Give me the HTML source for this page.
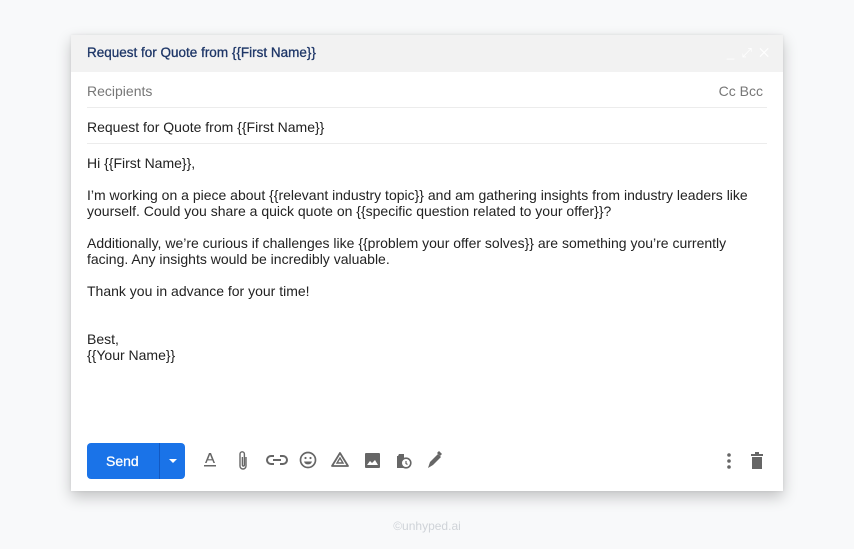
<!DOCTYPE html>
<html><head><meta charset="utf-8"><style>
body{margin:0;width:854px;height:549px;background:#f8f9fa;font-family:"Liberation Sans",sans-serif;position:relative;overflow:hidden}
.card{position:absolute;left:71px;top:35px;width:712px;height:456px;background:#fff;box-shadow:0 6px 14px rgba(0,0,0,.22),0 0 3px rgba(0,0,0,.08)}
.hdr{height:37px;background:#f2f2f2;position:relative}
.hdr .t{position:absolute;left:16px;top:10px;font-size:13.5px;color:#1f3768;-webkit-text-stroke:.3px #1f3768}
.win{position:absolute;right:14px;top:10px;color:#fff;font-size:13px}
.row{position:absolute;left:16px;right:16px;border-bottom:1px solid #ececec;font-size:14px}
.body{position:absolute;left:16px;top:120px;width:690px;white-space:nowrap;font-size:14px;color:#222;line-height:16px;letter-spacing:0}
.body p{margin:0 0 16px}
.send{position:absolute;left:16px;top:408px;width:98px;height:36px;background:#1a73e8;border-radius:4px;color:#fff}
.send span{position:absolute;left:19px;top:10px;font-size:14px;-webkit-text-stroke:.3px #fff}
.send i{position:absolute;left:72px;top:0;width:1px;height:36px;background:#1259c3}
.send b{position:absolute;left:82px;top:16px;border:4px solid transparent;border-top:4px solid #fff;border-bottom:0}
.ic{position:absolute;top:415px}
.foot{position:absolute;left:0;width:854px;top:519px;text-align:center;color:#cfd3d8;font-size:12px}
</style></head><body>
<div class="card">
<div class="hdr"><div class="t">Request for Quote from {{First Name}}</div><div class="win">_ &nbsp;⤢ &nbsp;✕</div></div>
<div class="row" style="top:48px;height:24px;color:#777"><span>Recipients</span><span style="float:right;margin-right:4px">Cc Bcc</span></div>
<div class="row" style="top:84px;height:24px;color:#222">Request for Quote from {{First Name}}</div>
<div class="body">
<p>Hi {{First Name}},</p>
<p>I’m working on a piece about {{relevant industry topic}} and am gathering insights from industry leaders like<br>yourself. Could you share a quick quote on {{specific question related to your offer}}?</p>
<p>Additionally, we’re curious if challenges like {{problem your offer solves}} are something you’re currently<br>facing. Any insights would be incredibly valuable.</p>
<p>Thank you in advance for your time!</p>
<p style="margin-top:32px">Best,<br>{{Your Name}}</p>
</div>
<div class="send"><span>Send</span><i></i><b></b></div>
<svg class="ic" style="left:130px" width="250" height="22" viewBox="0 0 250 22" fill="#666" stroke="#666">
<g stroke="none"><path d="M8 3h2l4 10h-1.6l-1-2.6H6.6l-1 2.6H4zM7.2 9.2h3.6L9 4.6z"/><rect x="3" y="15" width="12" height="1.5"/></g>
<path d="M45 7v9a3 3 0 0 1-6 0V4a2.2 2.2 0 0 1 4.4 0v11a1 1 0 0 1-2 0V7" fill="none" stroke-width="1.4"/>
<g fill="none" stroke-width="2"><path d="M73 6h-3a4 4 0 0 0 0 8h3M79 6h3a4 4 0 0 1 0 8h-3M72 10h8"/></g>
<circle cx="107" cy="10" r="7.5" fill="none" stroke-width="1.7"/><circle cx="104.5" cy="8" r="1.1" stroke="none"/><circle cx="109.5" cy="8" r="1.1" stroke="none"/><path d="M103 11.5a4.2 4.2 0 0 0 8 0z" stroke="none"/>
<path d="M139 3l8 13h-16z" fill="none" stroke-width="1.8" stroke-linejoin="round"/><path d="M139 8l3 5h-6z" fill="none" stroke-width="1.4"/>
<rect x="164" y="3" width="15" height="15" rx="1" stroke="none"/><path d="M166 15l3-4 2 2 3-3 3 5z" fill="#fff" stroke="none"/>
<path d="M197 6h6v-2h-5zM196 6h7v12h-7z" stroke="none"/><circle cx="205" cy="13" r="4.8" fill="#fff" stroke-width="1.6"/><path d="M205 11v2.5l1.5 1" fill="none" stroke-width="1.2"/>
<path d="M227 18l2-6 8-8 3 3-8 8z" stroke="none"/><path d="M236 3l2-2 3 3-2 2z" stroke="none"/>
</svg>
<svg class="ic" style="left:650px" width="50" height="22" fill="#666"><circle cx="8" cy="5" r="1.8"/><circle cx="8" cy="11" r="1.8"/><circle cx="8" cy="17" r="1.8"/><path d="M30 4h12v2H30zM34 2h4v2h-4zM31 7h10v12H31z"/></svg>
</div>
<div class="foot">©unhyped.ai</div>
</body></html>
